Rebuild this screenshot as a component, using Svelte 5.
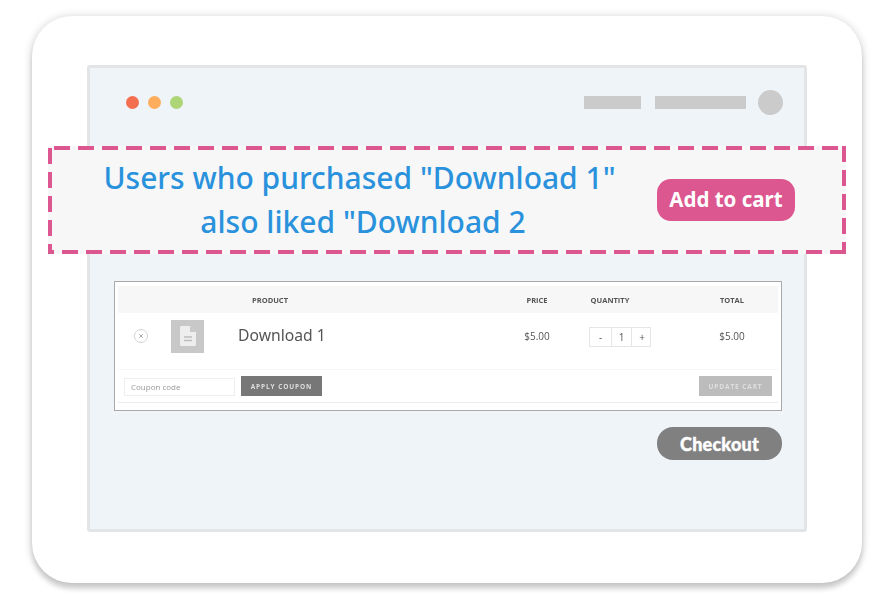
<script>
    // VARIABLES
    const dots = ["#f46f50", "#fdad5c", "#add475"];
</script>

<div class="page">
    <div class="card">
        <div class="screen">
            <header class="topbar">
                <div class="dots">
                    {#each dots as color}
                        <span class="dot" style="background: {color}"></span>
                    {/each}
                </div>
                <div class="nav">
                    <span class="bar short"></span>
                    <span class="bar long"></span>
                    <span class="avatar"></span>
                </div>
            </header>

            <section class="banner">
                <svg class="dashes" width="798" height="108" aria-hidden="true">
                    <line x1="6" y1="2" x2="798" y2="2" />
                    <line x1="796" y1="0" x2="796" y2="108" />
                    <line x1="2" y1="2" x2="2" y2="108" />
                    <line class="bottom" x1="0" y1="106" x2="798" y2="106" />
                </svg>
                <p class="message">
                    Users who purchased "Download 1"<br /><span class="second">also liked "Download 2</span>
                </p>
                <button class="add">Add to cart</button>
            </section>

            <div class="cart">
                <div class="row head">
                    <span></span>
                    <span></span>
                    <span class="product">PRODUCT</span>
                    <span class="center">PRICE</span>
                    <span class="qtyhead">QUANTITY</span>
                    <span class="center">TOTAL</span>
                </div>
                <div class="row item">
                    <span class="remove">
                        <svg width="14" height="14" viewBox="0 0 14 14">
                            <circle cx="7" cy="7" r="6.5" fill="none" stroke="#d4d4d4" />
                            <path d="M5.2 5.2l3.6 3.6M8.8 5.2l-3.6 3.6" stroke="#aaa" fill="none" />
                        </svg>
                    </span>
                    <span class="thumb">
                        <svg width="16" height="20" viewBox="0 0 16 20">
                            <path d="M1.5 0H10l6 6v12.500a1.500 1.500 0 0 1-1.500 1.500h-13A1.500 1.500 0 0 1 0 18.500v-17A1.500 1.500 0 0 1 1.500 0z" fill="#eeeeee" />
                            <path d="M10 0v6h6z" fill="#c8c8c8" />
                            <path d="M4 11h8M4 14.500h8" stroke="#bdbdbd" stroke-width="1.500" />
                        </svg>
                    </span>
                    <span class="name">Download 1</span>
                    <span class="center money">$5.00</span>
                    <span class="qtycell">
                        <span class="qty">
                            <span>-</span>
                            <span>1</span>
                            <span>+</span>
                        </span>
                    </span>
                    <span class="center money">$5.00</span>
                </div>
                <div class="actions">
                    <div class="coupon">
                        <span class="input">Coupon code</span>
                        <button class="apply">APPLY COUPON</button>
                    </div>
                    <button class="update">UPDATE CART</button>
                </div>
            </div>

            <div class="footer">
                <button class="checkout">Checkout</button>
            </div>
        </div>
    </div>
</div>

<style>
    :global(body) {
        margin: 0;
        background: #fff;
    }
    .page {
        width: 894px;
        height: 607px;
        padding: 16px 32px 0;
        box-sizing: border-box;
        overflow: hidden;
        font-family: "Noto Sans", "Open Sans", sans-serif;
    }
    .card {
        width: 830px;
        height: 567px;
        box-sizing: border-box;
        padding: 49px 55px 0 55px;
        background: #fff;
        border-radius: 40px;
        box-shadow:
            0 6px 5px rgba(0, 0, 0, 0.13),
            0 1px 10px rgba(0, 0, 0, 0.2);
    }
    .screen {
        width: 720px;
        height: 467px;
        box-sizing: border-box;
        background: #eff4f8;
        border: 3px solid #e3e4e5;
        border-radius: 3px;
    }
    .topbar {
        display: flex;
        justify-content: space-between;
        align-items: center;
        height: 25px;
        padding: 22px 21px 0 36px;
    }
    .dots {
        display: flex;
        gap: 9px;
    }
    .dot {
        width: 13px;
        height: 13px;
        border-radius: 50%;
    }
    .nav {
        display: flex;
        align-items: center;
    }
    .bar {
        height: 13px;
        background: #cbcbcb;
    }
    .short {
        width: 57px;
        margin-right: 14px;
    }
    .long {
        width: 91px;
        margin-right: 12px;
    }
    .avatar {
        width: 25px;
        height: 25px;
        border-radius: 50%;
        background: #cbcbcb;
    }
    .banner {
        position: relative;
        display: flex;
        align-items: center;
        width: 798px;
        height: 108px;
        margin: 31px 0 0 -42px;
        background: #f7f7f7;
    }
    .dashes {
        position: absolute;
        inset: 0;
    }
    .dashes line {
        stroke: #dc568f;
        stroke-width: 4;
        stroke-dasharray: 16 8;
    }
    .dashes .bottom {
        stroke-dashoffset: 10;
    }
    .message {
        width: 609px;
        box-sizing: border-box;
        margin: 0;
        padding-left: 14px;
        font-size: 30px;
        font-weight: 500;
        line-height: 44px;
        text-align: center;
        color: #2a92dc;
    }
    .second {
        display: inline-block;
        margin-left: 7px;
    }
    .add {
        width: 138px;
        height: 42px;
        padding: 0 0 2px;
        border-radius: 14px;
        background: #dc568f;
        color: #fff;
        font-size: 20.500px;
        font-weight: 700;
    }
    .cart {
        width: 668px;
        height: 130px;
        box-sizing: border-box;
        margin: 27px 0 0 24px;
        padding: 4px 3px 0;
        background: #fff;
        border: 1px solid #a9a9a9;
        font-family: "Open Sans", sans-serif;
        color: #555;
        filter: blur(0.3px);
    }
    .row {
        display: grid;
        grid-template-columns: 47px 46px 1fr 74px 112px 92px;
        align-items: center;
    }
    .head {
        height: 27px;
        background: #f7f7f7;
        font-size: 7.500px;
        font-weight: 700;
        color: #555;
    }
    .product {
        padding-left: 41px;
    }
    .center {
        text-align: center;
    }
    .qtyhead {
        width: 72px;
        text-align: center;
    }
    .item {
        height: 57px;
        padding-bottom: 11px;
        border-bottom: 1px solid #f5f5f5;
        box-sizing: border-box;
    }
    .remove {
        display: flex;
        justify-content: flex-end;
        padding-right: 17px;
    }
    .thumb {
        display: flex;
        align-items: center;
        justify-content: center;
        width: 33px;
        height: 33px;
        margin: 1px 0 0 6px;
        background: #c8c8c8;
    }
    .name {
        padding-left: 27px;
        padding-bottom: 1px;
        font-size: 15.700px;
        color: #555;
        font-family: "Noto Sans", sans-serif;
    }
    .money {
        padding-left: 0;
        font-size: 10px;
    }
    .qtycell {
        padding-left: 15px;
    }
    .qty {
        display: inline-grid;
        grid-template-columns: 21px 20px 21px;
        width: 62px;
        height: 20px;
        box-sizing: border-box;
        border: 1px solid #e6e6e6;
        font-size: 10px;
        line-height: 18px;
        text-align: center;
    }
    .qty span + span {
        border-left: 1px solid #e6e6e6;
    }
    .actions {
        display: flex;
        justify-content: space-between;
        align-items: center;
        height: 33px;
        box-sizing: border-box;
        padding: 0 6px;
        border-bottom: 1px solid #ececec;
    }
    .coupon {
        display: flex;
        align-items: center;
        gap: 6px;
    }
    .input {
        width: 111px;
        height: 18px;
        box-sizing: border-box;
        margin-top: 1px;
        padding-left: 6px;
        border: 1px solid #eee;
        font-size: 8px;
        line-height: 16px;
        color: #999;
    }
    button {
        padding: 0;
        border: 0;
        font-family: inherit;
    }
    .apply,
    .update {
        height: 20px;
        font-size: 6.500px;
        font-weight: 700;
        letter-spacing: 0.9px;
    }
    .apply {
        width: 81px;
        background: #777;
        color: #ddd;
    }
    .update {
        width: 73px;
        background: #bcbcbc;
        color: #dedede;
    }
    .footer {
        display: flex;
        justify-content: flex-end;
        margin: 16px 22px 0 0;
    }
    .checkout {
        width: 125px;
        height: 33px;
        border-radius: 16px;
        background: #808080;
        color: #fff;
        font-family: "Lato", sans-serif;
        font-size: 18px;
        font-weight: 900;
        letter-spacing: 0.2px;
        -webkit-text-stroke: 0.4px #fff;
    }
</style>
